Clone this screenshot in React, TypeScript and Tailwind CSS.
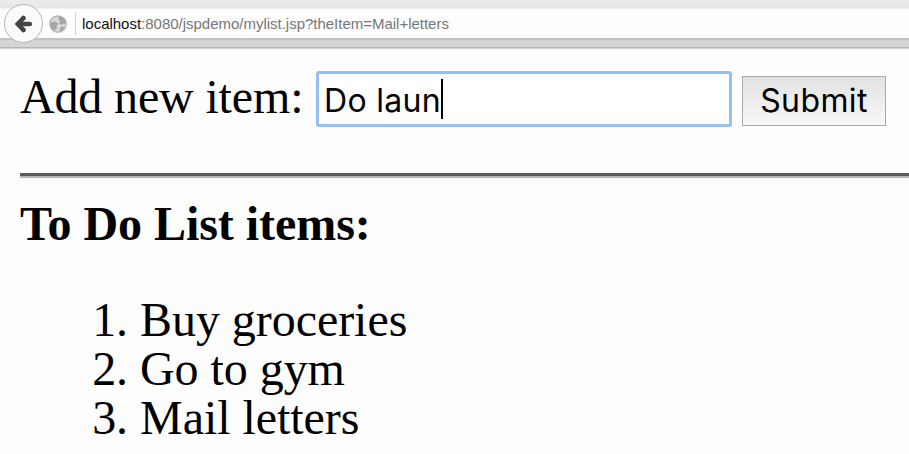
const items = ["Buy groceries", "Go to gym", "Mail letters"];

function Toolbar() {
  return (
    <header className="relative flex h-[49px] flex-col border-b border-[#d2d2d2] bg-[#d5d5d5]">
      <div className="h-[9px] border-b border-[#efefef] bg-linear-to-b from-[#ececec] to-[#e6e6e6]" />
      <div className="flex h-[29px] items-center bg-[#fdfdfd] pl-[49px]">
        <svg width="18" height="18" viewBox="0 0 18 18" className="shrink-0">
          <circle cx="9" cy="9" r="8.2" fill="#d8d8d8" stroke="#b2b2b2" strokeWidth="1.2" />
          <path d="M9.5 1 Q14 1.5 16.5 6 L16.5 9 L14.5 8.5 L12.5 10 L10 8 L11.5 6 L9.5 4.5 Z" fill="#a3a3a3" />
          <path d="M1 9.5 L3 7 L6.5 6.5 L9.5 9 L7.5 11 L8 13 L5.5 15.5 Q1.5 13.5 1 9.5 Z" fill="#a5a5a5" />
          <path d="M11 12.5 L14 11.5 L16 12.5 Q14 16 11 16.8 Z" fill="#a8a8a8" />
        </svg>
        <span className="ml-2 h-[23px] w-px bg-[#d2d2d2]" />
        <span className="ml-1.5 whitespace-nowrap font-['Liberation_Sans',Arial,sans-serif] text-[15px] leading-[29px] tracking-[-0.015px] text-[#777]">
          <span className="text-[#111]">localhost</span>:8080/jspdemo/mylist.jsp?theItem=Mail+letters
        </span>
      </div>
      <div className="h-[2px] bg-[#c2c2c2]" />
      <div className="h-[7px] bg-[#d5d5d5]" />
      <div className="h-px bg-[#b5b5b5]" />
      <button aria-label="Back" className="absolute left-[4px] top-[4px] flex size-[39px] items-center justify-center rounded-full border-[1.5px] border-[#b5b5b5] bg-[#fbfbfb]">
        <svg width="20" height="20" viewBox="0 0 20 20" fill="none" stroke="#444" strokeWidth="4.6" strokeLinecap="round">
          <path d="M10 3.5 L3.8 10 L10 16.5" strokeLinecap="butt" strokeLinejoin="miter" />
          <path d="M9.4 4 L9.5 3.9 M9.4 16 L9.5 16.1" />
          <path d="M5 10 H15.8" />
        </svg>
      </button>
    </header>
  );
}

export default function App() {
  return (
    <div className="h-[454px] overflow-hidden bg-[#fdfdfd] font-['Liberation_Serif','Times_New_Roman',serif] text-[48px] leading-[49px] text-black">
      <Toolbar />
      <main className="pl-5">
        <form className="flex items-start pt-[22px]" onSubmit={(e) => e.preventDefault()}>
          <label className="w-[296px] shrink-0 whitespace-nowrap pt-px tracking-[-0.15px]">Add new item:</label>
          <div className="flex h-[56px] w-[416px] shrink-0 items-center rounded-[3px] border-[3px] border-[#94c0f2] bg-white pl-[5px] font-[Inter,sans-serif] text-[32px]">
            <span className="whitespace-nowrap pt-0.5 tracking-[0.3px]">Do laun</span>
            <span className="h-[40px] w-[2px] bg-black" />
          </div>
          <button className="ml-[10px] mt-[5px] h-[50px] w-[144px] shrink-0 border border-[#aaa] bg-linear-to-b from-[#e2e2e2] to-[#f8f8f8] font-[Inter,sans-serif] text-[32px] leading-[48px] tracking-[0.4px]">
            Submit
          </button>
        </form>
        <hr className="mt-[46px] h-[5px] border-0 border-b-2 border-t-3 border-b-[#b5b5b5] border-t-[#5c5c5c]" />
        <h3 className="mt-[21px] font-bold tracking-[-0.05px]">To Do List items:</h3>
        <ol className="mt-[47px] list-decimal pl-[120px]">
          {items.map((item) => (
            <li key={item} className="tracking-[-0.05px]">{item}</li>
          ))}
        </ol>
      </main>
    </div>
  );
}
